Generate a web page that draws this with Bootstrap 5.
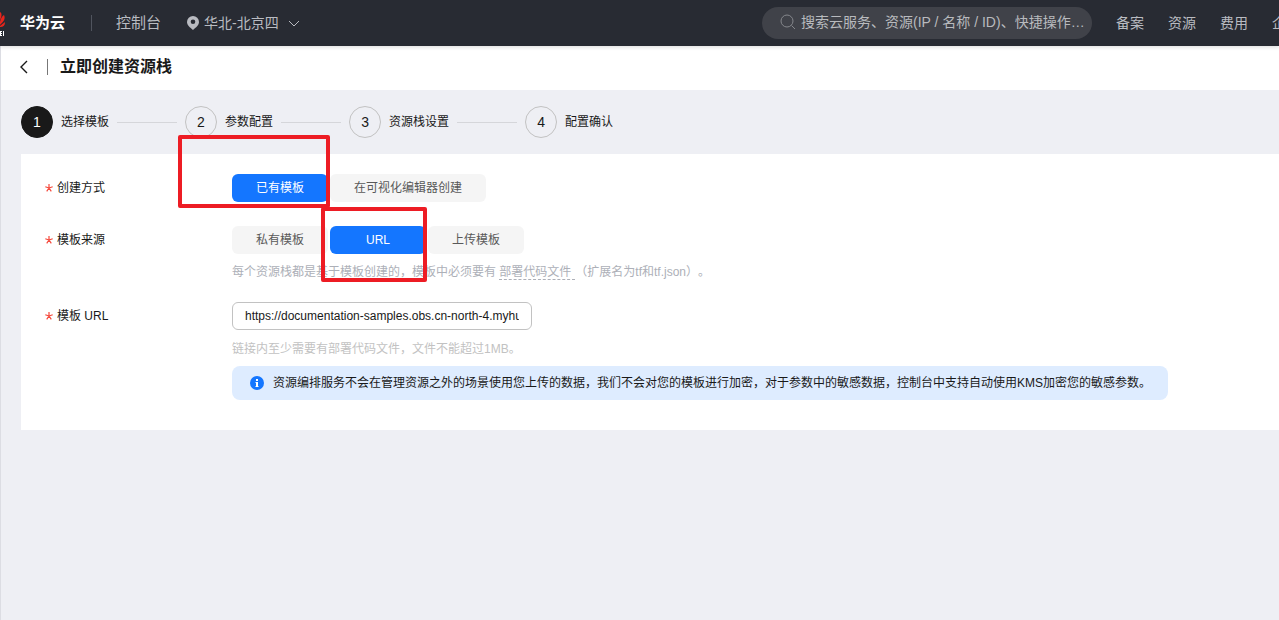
<!DOCTYPE html>
<html lang="zh-CN">
<head>
<meta charset="utf-8">
<meta name="viewport" content="width=device-width, initial-scale=1">
<title>立即创建资源栈</title>
<link href="https://cdn.jsdelivr.net/npm/bootstrap@5.3.0/dist/css/bootstrap.min.css" rel="stylesheet">
<style>
  body { font-family: "Liberation Sans", "Noto Sans CJK SC", sans-serif; font-size: 12px; line-height: 18px; color: #191919; background: #eeeff4; text-spacing-trim: space-all; }
  a { color: inherit; text-decoration: none; }
  .topbar { height: 46px; background: #282b33; color: #b9bbc1; font-size: 14px; box-shadow: 0 1px 4px rgba(0,0,0,.15); }
  .topbar a, .region-btn { white-space: nowrap; flex: none; }
  .brand-logo { width: 6px; height: 30px; flex: none; }
  .brand-name { color: #fff; font-size: 15px; font-weight: 700; margin-left: 14px; }
  .brand-rule { width: 1px; height: 16px; background: #50545e; margin: 0 24px 0 26px; flex: none; }
  .console-link { font-size: 15px; }
  .region-btn { border: 0; background: none; color: inherit; padding: 0; margin-left: 26px; gap: 5px; }
  .search-pill { width: 330px; height: 32px; border-radius: 16px; background: #404249; padding: 0 4px 2px 18px; margin-right: 24px; gap: 5px; }
  .search-pill input { border: 0; background: none; outline: 0; color: #c3c5ca; min-width: 0; padding: 0; text-overflow: ellipsis; }
  .search-pill input::placeholder { color: #b8babe; opacity: 1; }
  .top-links { gap: 24px; margin-right: -21px; }
  .page-body { border-left: 1px solid #dcdde3; flex: 1; }
  .title-bar { height: 44px; background: #fff; padding: 0 18px 2px; }
  .title-rule { width: 1px; height: 16px; background: #777; margin: 0 12px 0 16px; }
  .title-bar h1 { font-size: 16px; line-height: 24px; font-weight: 700; margin: 0; }
  .back-btn { border: 0; background: none; padding: 0; width: 12px; }
  .steps { padding: 16px 20px; gap: 8px; list-style: none; margin: 0; }
  .step-no { width: 32px; height: 32px; border: 1px solid #c2c2c2; border-radius: 50%; font-size: 14px; }
  .step-now { background: #191919; border-color: #191919; color: #fff; }
  .step-line { width: 60px; height: 1px; background: #d5d6da; }
  .panel { background: #fff; margin-left: 20px; padding: 20px 24px 30px; }
  .field-label { width: 187px; flex: none; line-height: 28px; padding: 0; }
  .req { width: 8px; height: 8px; margin-right: 4px; vertical-align: baseline; }
  .opt-set { gap: 2px; }
  .opt { position: relative; height: 28px; min-width: 96px; border: 0; border-radius: 6px; background: #f5f5f5; color: #595959; padding: 0 24px; }
  .opt-on { background: #1476ff; color: #fff; }
  .note { color: #adb0b8; line-height: 16px; margin: 10px 0 -2px; }
  .note a { border-bottom: 1px dashed #adb0b8; padding-right: 4px; }
  .note-pale { color: #c2c2c2; margin: 10px 0 8px; }
  .url-input { width: 300px; max-width: 100%; height: 28px; border: 1px solid #c2c2c2; border-radius: 6px; padding: 0 12px; font-size: 12px; color: #191919; }
  .tip { background: #deecff; border-radius: 8px; padding: 8px 16px 8px 18px; gap: 9px; max-width: 936px; min-height: 34px; }
  .marker { position: absolute; border: 4px solid #ed1c24; border-radius: 2px; pointer-events: none; z-index: 2; }
  .marker-way { left: -54px; top: -39px; width: 152px; height: 73px; }
  .marker-src { left: -9px; top: -19px; width: 106px; height: 75px; }
</style>
</head>
<body class="d-flex flex-column min-vh-100">
<header class="topbar d-flex align-items-center overflow-hidden position-relative">
  <a href="#" class="d-flex align-items-center">
    <svg class="brand-logo" viewBox="0 0 6 30" aria-hidden="true">
      <path d="M0 4C2 5 2 8 0 12ZM0 14C1 10 2 8 4 7C6 11 3 14 0 17ZM0 18L5 14C5 18 3 19 0 19Z" fill="#e8251c"/>
      <path d="M0 23H2V24H1V25H2V26H1V27H2V28H0ZM3 23H4V28H3Z" fill="#fff"/>
    </svg>
    <span class="brand-name">华为云</span>
  </a>
  <span class="brand-rule"></span>
  <a href="#" class="console-link">控制台</a>
  <button type="button" class="region-btn d-flex align-items-center">
    <svg width="12" height="14" viewBox="0 0 12 14" aria-hidden="true"><path fill="#b9bbc1" fill-rule="evenodd" d="M6 0a6 6 0 0 0-6 6c0 3 3 5.500 6 8 3-2.500 6-5 6-8a6 6 0 0 0-6-6Zm0 3.500a2.300 2.300 0 1 1 0 4.600 2.300 2.300 0 0 1 0-4.600Z"/></svg>
    <span>华北-北京四</span>
    <svg width="12" height="7" viewBox="0 0 12 7" class="ms-1" aria-hidden="true"><path d="M1 1l5 5 5-5" fill="none" stroke="#b9bbc1"/></svg>
  </button>
  <label class="search-pill d-flex align-items-center ms-auto flex-shrink-0">
    <svg width="16" height="16" viewBox="0 0 16 16" aria-hidden="true" class="flex-shrink-0"><g fill="none" stroke="#85878c"><circle cx="7" cy="7" r="6"/><path d="M11.500 11.500L15 15"/></g></svg>
    <input type="text" class="flex-grow-1" aria-label="搜索" placeholder="搜索云服务、资源(IP / 名称 / ID)、快捷操作…">
  </label>
  <nav class="top-links d-flex" aria-label="快捷入口">
    <a href="#">备案</a><a href="#">资源</a><a href="#">费用</a><a href="#">企业</a>
  </nav>
</header>

<main class="page-body">
  <div class="title-bar d-flex align-items-center">
    <button type="button" class="back-btn d-flex" aria-label="返回"><svg width="10" height="14" viewBox="0 0 10 14"><path d="M8 1L2 7l6 6" fill="none" stroke="#191919" stroke-width="1.400"/></svg></button>
    <span class="title-rule"></span>
    <h1>立即创建资源栈</h1>
  </div>

  <ol class="steps d-flex flex-wrap align-items-center">
    <li class="step-no step-now d-flex align-items-center justify-content-center">1</li>
    <li>选择模板</li><li class="step-line"></li>
    <li class="step-no d-flex align-items-center justify-content-center">2</li>
    <li>参数配置</li><li class="step-line"></li>
    <li class="step-no d-flex align-items-center justify-content-center">3</li>
    <li>资源栈设置</li><li class="step-line"></li>
    <li class="step-no d-flex align-items-center justify-content-center">4</li>
    <li>配置确认</li>
  </ol>

  <form class="panel">
    <div class="d-flex mb-4" role="group" aria-labelledby="way">
      <div class="field-label" id="way"><svg class="req" viewBox="0 0 8 8" aria-hidden="true"><path d="M4 0V4L.3 2.800M4 4l3.700-1.200M4 4L1.700 7.300M4 4l2.300 3.300" fill="none" stroke="#f5483b" stroke-width="1.200"/></svg>创建方式</div>
      <div class="opt-set d-flex">
        <button type="button" class="opt opt-on">已有模板<span class="marker marker-way"></span></button>
        <button type="button" class="opt">在可视化编辑器创建</button>
      </div>
    </div>

    <div class="d-flex mb-4" role="group" aria-labelledby="src">
      <div class="field-label" id="src"><svg class="req" viewBox="0 0 8 8" aria-hidden="true"><path d="M4 0V4L.3 2.800M4 4l3.700-1.200M4 4L1.700 7.300M4 4l2.300 3.300" fill="none" stroke="#f5483b" stroke-width="1.200"/></svg>模板来源</div>
      <div>
        <div class="opt-set d-flex">
          <button type="button" class="opt">私有模板</button>
          <button type="button" class="opt opt-on">URL<span class="marker marker-src"></span></button>
          <button type="button" class="opt">上传模板</button>
        </div>
        <p class="note">每个资源栈都是基于模板创建的，模板中必须要有 <a href="#">部署代码文件</a>（扩展名为tf和tf.json）。</p>
      </div>
    </div>

    <div class="d-flex">
      <label class="field-label" for="tplUrl"><svg class="req" viewBox="0 0 8 8" aria-hidden="true"><path d="M4 0V4L.3 2.800M4 4l3.700-1.200M4 4L1.700 7.300M4 4l2.300 3.300" fill="none" stroke="#f5483b" stroke-width="1.200"/></svg>模板 URL</label>
      <div class="flex-grow-1">
        <input id="tplUrl" type="text" class="url-input" value="https://documentation-samples.obs.cn-north-4.myhuaweicloud.com/">
        <p class="note-pale">链接内至少需要有部署代码文件，文件不能超过1MB。</p>
        <div class="tip d-flex align-items-center">
          <svg width="14" height="14" viewBox="0 0 14 14" class="flex-shrink-0" aria-hidden="true"><circle cx="7" cy="7" r="7" fill="#1476ff"/><path d="M6 3h2v2H6zM5.500 6H8v4h.500v1h-3v-1H6V7h-.500z" fill="#fff"/></svg>
          <span>资源编排服务不会在管理资源之外的场景使用您上传的数据，我们不会对您的模板进行加密，对于参数中的敏感数据，控制台中支持自动使用KMS加密您的敏感参数。</span>
        </div>
      </div>
    </div>
  </form>
</main>
<script src="https://cdn.jsdelivr.net/npm/bootstrap@5.3.0/dist/js/bootstrap.bundle.min.js"></script>
</body>
</html>
